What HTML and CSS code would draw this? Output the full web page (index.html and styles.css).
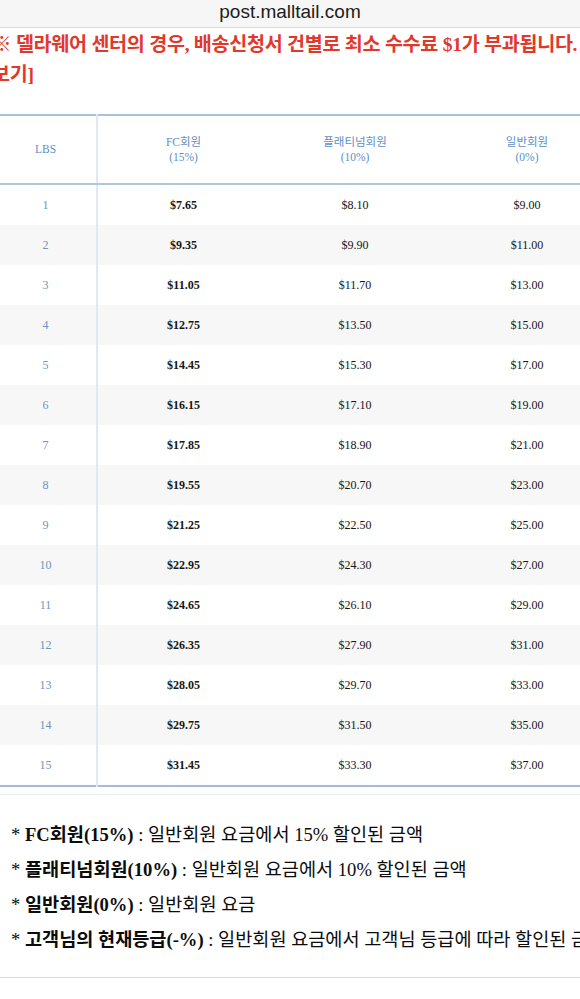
FILE: index.html
```html
<!DOCTYPE html>
<html lang="ko">
<head>
<meta charset="utf-8">
<title>post.malltail.com</title>
<link rel="stylesheet" href="styles.css">
</head>
<body>
<header class="urlbar"><span class="url">post.malltail.com</span></header>
<main class="page">
  <p class="notice"><span class="line">※ 델라웨어 센터의 경우, 배송신청서 건별로 최소 수수료 $1가 부과됩니다. [자세히</span><span class="line">보기]</span></p>
  <table class="rate">
    <colgroup>
      <col class="c-lbs"><col class="c-fee"><col class="c-fee"><col class="c-fee">
    </colgroup>
    <thead>
      <tr><th class="lbs">LBS</th><th>FC회원<br>(15%)</th><th>플래티넘회원<br>(10%)</th><th>일반회원<br>(0%)</th></tr>
    </thead>
    <tbody>
      <tr><td class="lbs">1</td><td class="fc">$7.65</td><td>$8.10</td><td>$9.00</td></tr>
      <tr><td class="lbs">2</td><td class="fc">$9.35</td><td>$9.90</td><td>$11.00</td></tr>
      <tr><td class="lbs">3</td><td class="fc">$11.05</td><td>$11.70</td><td>$13.00</td></tr>
      <tr><td class="lbs">4</td><td class="fc">$12.75</td><td>$13.50</td><td>$15.00</td></tr>
      <tr><td class="lbs">5</td><td class="fc">$14.45</td><td>$15.30</td><td>$17.00</td></tr>
      <tr><td class="lbs">6</td><td class="fc">$16.15</td><td>$17.10</td><td>$19.00</td></tr>
      <tr><td class="lbs">7</td><td class="fc">$17.85</td><td>$18.90</td><td>$21.00</td></tr>
      <tr><td class="lbs">8</td><td class="fc">$19.55</td><td>$20.70</td><td>$23.00</td></tr>
      <tr><td class="lbs">9</td><td class="fc">$21.25</td><td>$22.50</td><td>$25.00</td></tr>
      <tr><td class="lbs">10</td><td class="fc">$22.95</td><td>$24.30</td><td>$27.00</td></tr>
      <tr><td class="lbs">11</td><td class="fc">$24.65</td><td>$26.10</td><td>$29.00</td></tr>
      <tr><td class="lbs">12</td><td class="fc">$26.35</td><td>$27.90</td><td>$31.00</td></tr>
      <tr><td class="lbs">13</td><td class="fc">$28.05</td><td>$29.70</td><td>$33.00</td></tr>
      <tr><td class="lbs">14</td><td class="fc">$29.75</td><td>$31.50</td><td>$35.00</td></tr>
      <tr><td class="lbs">15</td><td class="fc">$31.45</td><td>$33.30</td><td>$37.00</td></tr>
    </tbody>
  </table>
  <div class="table-foot"></div>
  <ul class="notes">
    <li><b>FC회원(15%)</b> : 일반회원 요금에서 15% 할인된 금액</li>
    <li><b>플래티넘회원(10%)</b> : 일반회원 요금에서 10% 할인된 금액</li>
    <li><b>일반회원(0%)</b> : 일반회원 요금</li>
    <li><b>고객님의 현재등급(-%)</b> : 일반회원 요금에서 고객님 등급에 따라 할인된 금액</li>
  </ul>
  <hr class="rule">
</main>
</body>
</html>
```
FILE: styles.css
```css
html, body {
  margin: 0;
  padding: 0;
  background: #fff;
  overflow: hidden;
}
body {
  width: 580px;
  font-family: "Liberation Serif", "Noto Sans CJK KR", serif;
  color: #111;
}
.urlbar {
  height: 27px;
  background: #f6f6f6;
  border-bottom: 1px solid #dcdcdc;
  display: flex;
  justify-content: center;
  align-items: center;
}
.url {
  font-family: "Liberation Sans", Arial, sans-serif;
  font-size: 19px;
  color: #1c1c1c;
  line-height: 1;
  margin-top: -4px;
}
.page {
  margin-left: -5px;
  width: 640px;
}
.notice {
  margin: 0 0 0 -3px;
  padding-top: 2px;
  color: #e2382c;
  font-weight: bold;
  font-size: 19.6px;
  line-height: 30px;
  letter-spacing: -0.3px;
  white-space: nowrap;
}
.notice .line {
  display: block;
}
.rate {
  margin-top: 24px;
  border-collapse: collapse;
  table-layout: fixed;
  width: 618px;
  border-top: 2px solid #a9c2dc;
  border-bottom: 2px solid #a5bdd4;
}
.c-lbs { width: 102px; }
.c-fee { width: 172px; }
.rate th {
  height: 67px;
  padding: 0;
  font-weight: normal;
  font-size: 11.5px;
  line-height: 15px;
  color: #5e8fc6;
  border-bottom: 2px solid #b1c6da;
  vertical-align: middle;
  text-align: center;
}
.rate td {
  height: 40px;
  padding: 0;
  font-size: 12px;
  text-align: center;
  color: #151515;
}
.rate .lbs {
  border-right: 2px solid #e0e9f2;
}
.rate td.lbs {
  color: #6f94bb;
}
.rate td.fc {
  font-weight: bold;
}
.rate tbody tr:nth-child(even) td {
  background: #f7f7f7;
}
.table-foot {
  height: 7px;
  border-bottom: 1px solid #edf1f4;
}
.notes {
  list-style: none;
  margin: 22px 0 0;
  padding: 0 0 0 16px;
  font-size: 18.6px;
  line-height: 35px;
  color: #0c0c0c;
  white-space: nowrap;
}
.notes li::before {
  content: "* ";
}
.notes b {
  font-weight: bold;
}
.rule {
  margin: 20px 0 0;
  border: 0;
  border-top: 1px solid #dddddd;
}
```
